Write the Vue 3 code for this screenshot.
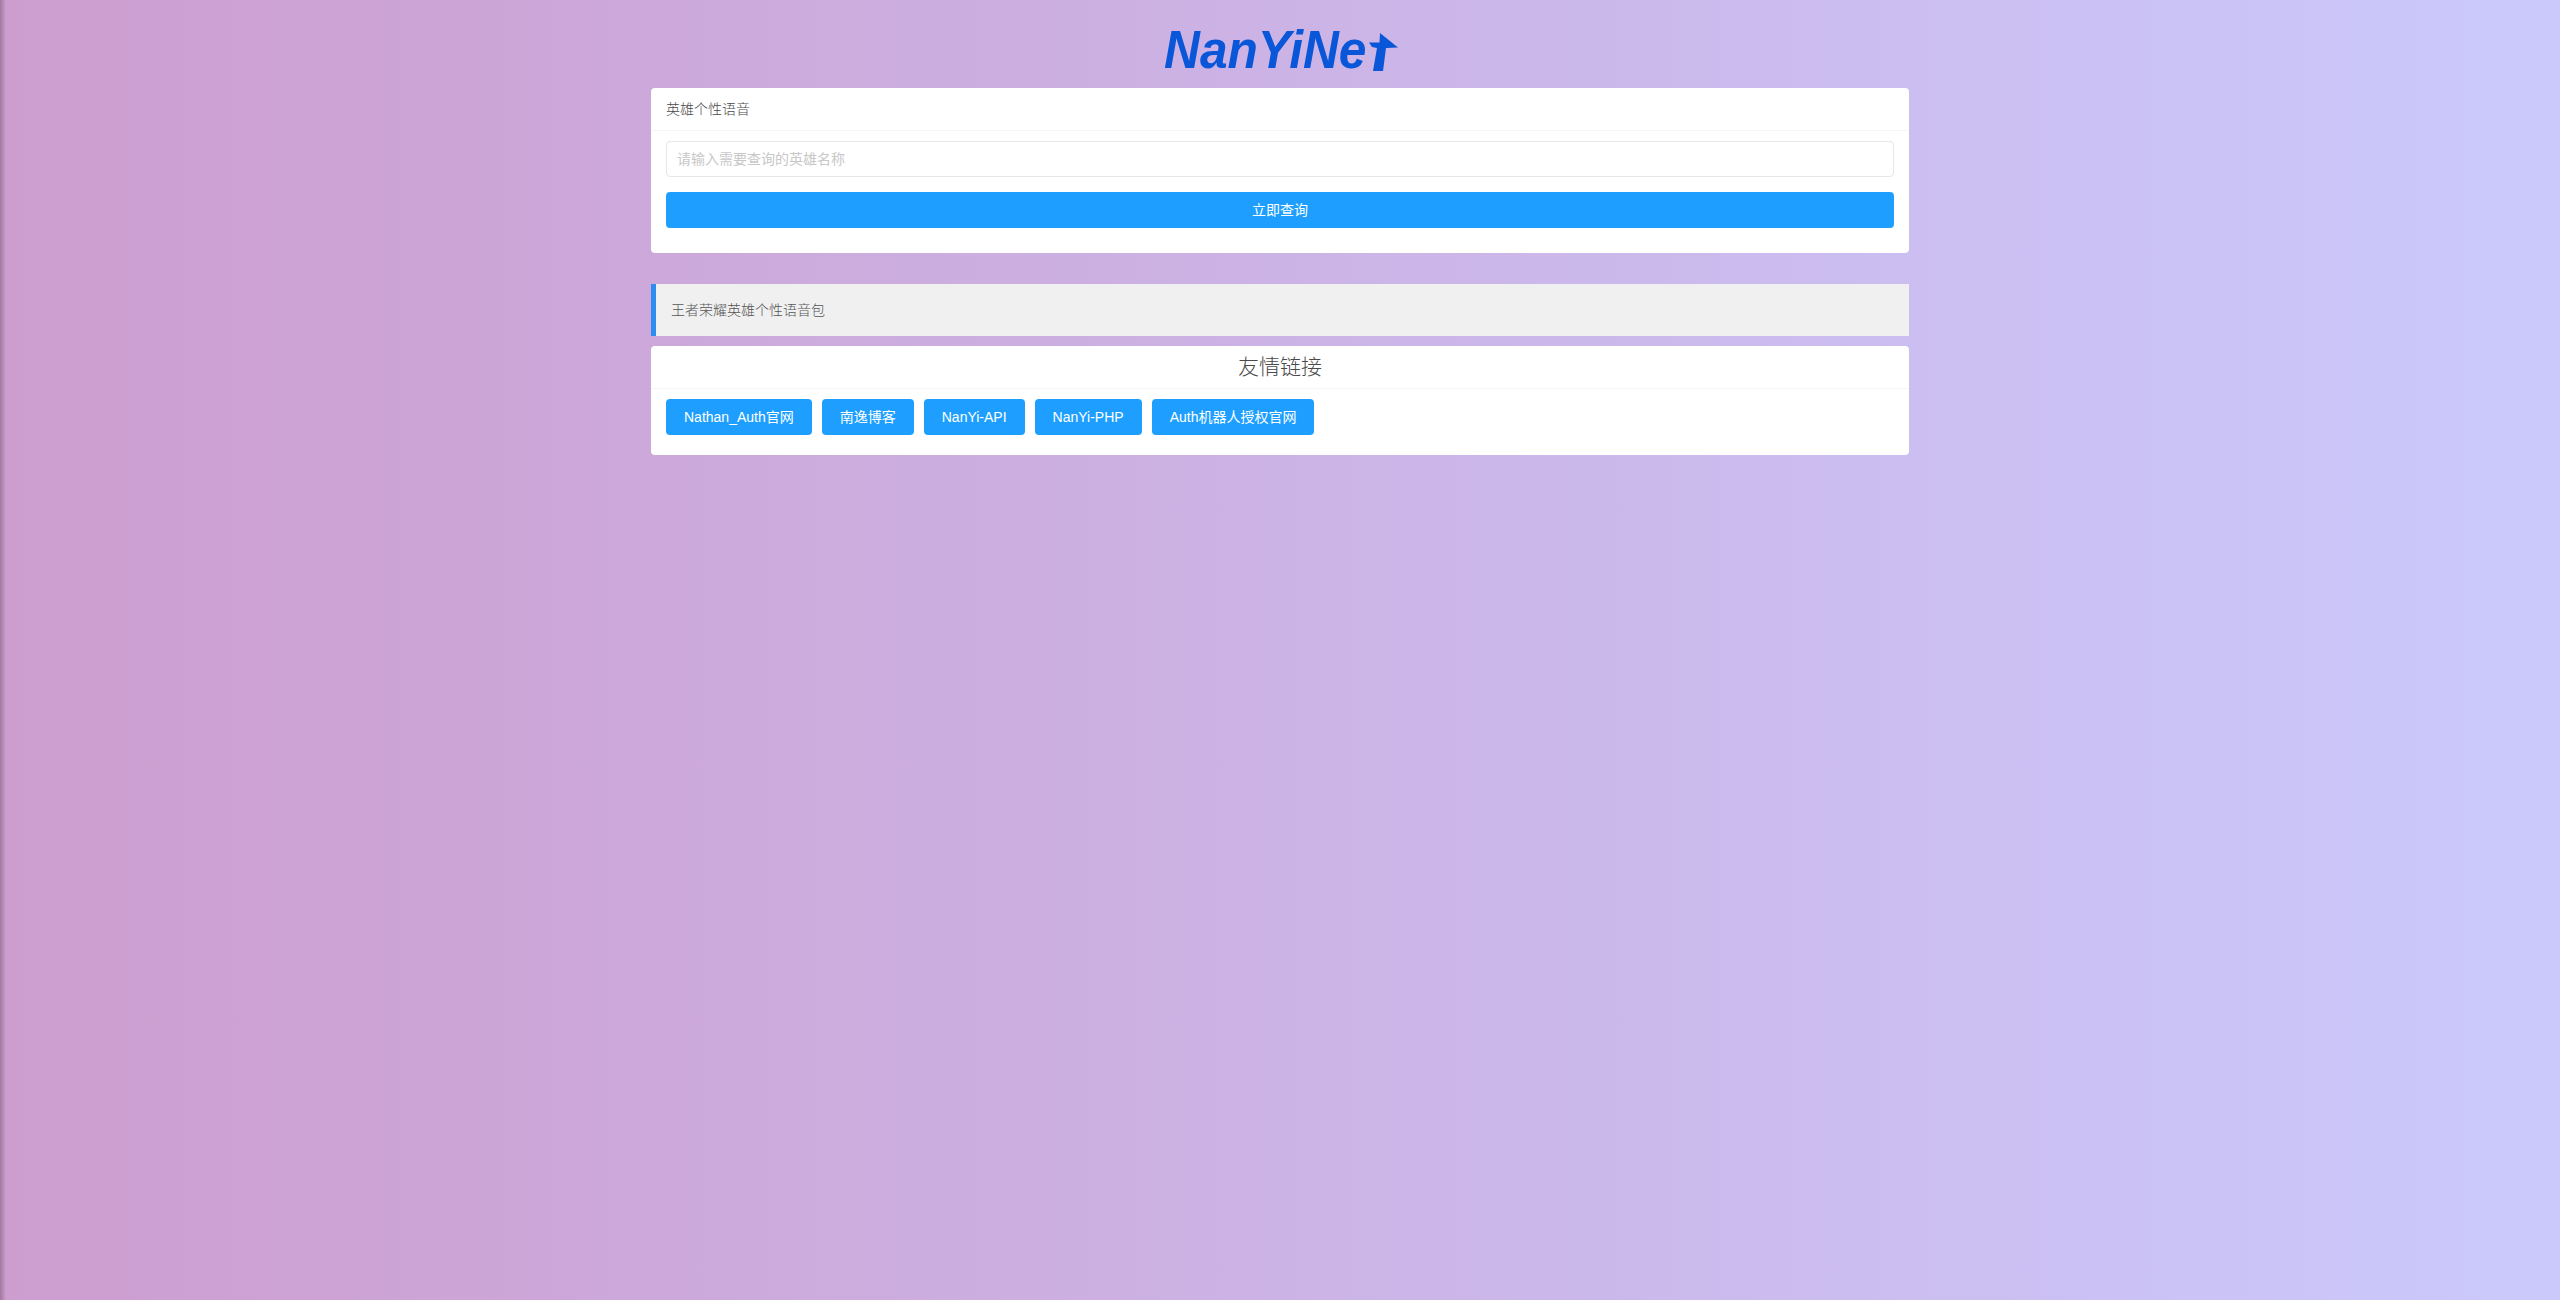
<script setup>
const links = ['Nathan_Auth官网', '南逸博客', 'NanYi-API', 'NanYi-PHP', 'Auth机器人授权官网']
</script>

<template>
  <div class="page">
    <div class="logo">
      <div class="logo-box"><span class="logo-text">NanYiNe</span></div>
      <svg class="logo-t" width="29" height="38" viewBox="0 0 29 38">
        <path d="M11 0 L29 14.5 L17 15 L14 38 L4 38 L8 15 L3 14 L0 9.5 L10.5 9.5 Z" fill="#0a56d8" />
      </svg>
    </div>

    <section class="card first">
      <header class="card-head">英雄个性语音</header>
      <div class="card-body">
        <input class="field" placeholder="请输入需要查询的英雄名称" />
        <button class="btn block">立即查询</button>
      </div>
    </section>

    <div class="quote">王者荣耀英雄个性语音包</div>

    <section class="card">
      <header class="card-head title">友情链接</header>
      <div class="card-body links">
        <a v-for="l in links" :key="l" class="btn">{{ l }}</a>
      </div>
    </section>
  </div>
</template>

<style>
html, body { margin: 0; padding: 0; }
body {
  min-height: 1300px;
  background: linear-gradient(90deg, #cd9dcf 0%, #cbc9fc 100%);
}
</style>

<style scoped>
.page {
  width: 1258px;
  margin: 0 auto;
  font-family: "Liberation Sans", "Noto Sans CJK SC", sans-serif;
  font-size: 14px;
  color: #666;
  padding-top: 18px;
  display: flex;
  flex-direction: column;
}
.page::before {
  content: "";
  position: fixed;
  left: 0; top: 0; bottom: 0;
  width: 6px;
  background: linear-gradient(90deg, #a0789f, rgba(160,120,160,0));
}
.logo {
  height: 70px;
  display: flex;
  justify-content: center;
  align-items: flex-start;
  padding: 6px 0 0 2px;
  box-sizing: border-box;
}
.logo-box {
  width: 205px;
  height: 50px;
}
.logo-text {
  display: inline-block;
  font-family: "Liberation Sans", sans-serif;
  font-weight: 700;
  font-style: italic;
  font-size: 54px;
  line-height: 50px;
  color: #0a56d8;
  white-space: nowrap;
  transform: scaleX(0.92);
  transform-origin: left center;
}
.logo-t { margin-top: 9px; }
.card {
  background: #fff;
  border-radius: 4px;
  display: flex;
  flex-direction: column;
}
.card.first { margin-bottom: 31px; }
.card-head {
  height: 42px;
  line-height: 42px;
  padding: 0 15px;
  border-bottom: 1px solid #f6f6f6;
  font-weight: 300;
  color: #4a4a4a;
}
.card-head.title {
  text-align: center;
  font-size: 21px;
  padding: 0;
}
.card-body {
  padding: 10px 15px 25px;
  display: flex;
  flex-direction: column;
  gap: 15px;
}
.links {
  flex-direction: row;
  gap: 10px;
  padding-bottom: 20px;
}
.field {
  height: 36px;
  box-sizing: border-box;
  width: 100%;
  border: 1px solid #e6e6e6;
  border-radius: 4px;
  padding: 0 10px;
  font: inherit;
  outline: none;
}
.field::placeholder { color: #c8c8c8; }
.btn {
  font: inherit;
  font-size: 14px;
  height: 36px;
  line-height: 36px;
  border: none;
  border-radius: 4px;
  background: #1e9fff;
  color: #fff;
  padding: 0 18px;
  white-space: nowrap;
  box-sizing: border-box;
}
.btn.block { width: 100%; }
.quote {
  height: 52px;
  line-height: 52px;
  padding-left: 15px;
  margin-bottom: 10px;
  border-left: 5px solid #2d8cf0;
  background: #f0f0f0;
  color: #555;
  font-weight: 300;
  box-sizing: border-box;
}
</style>
